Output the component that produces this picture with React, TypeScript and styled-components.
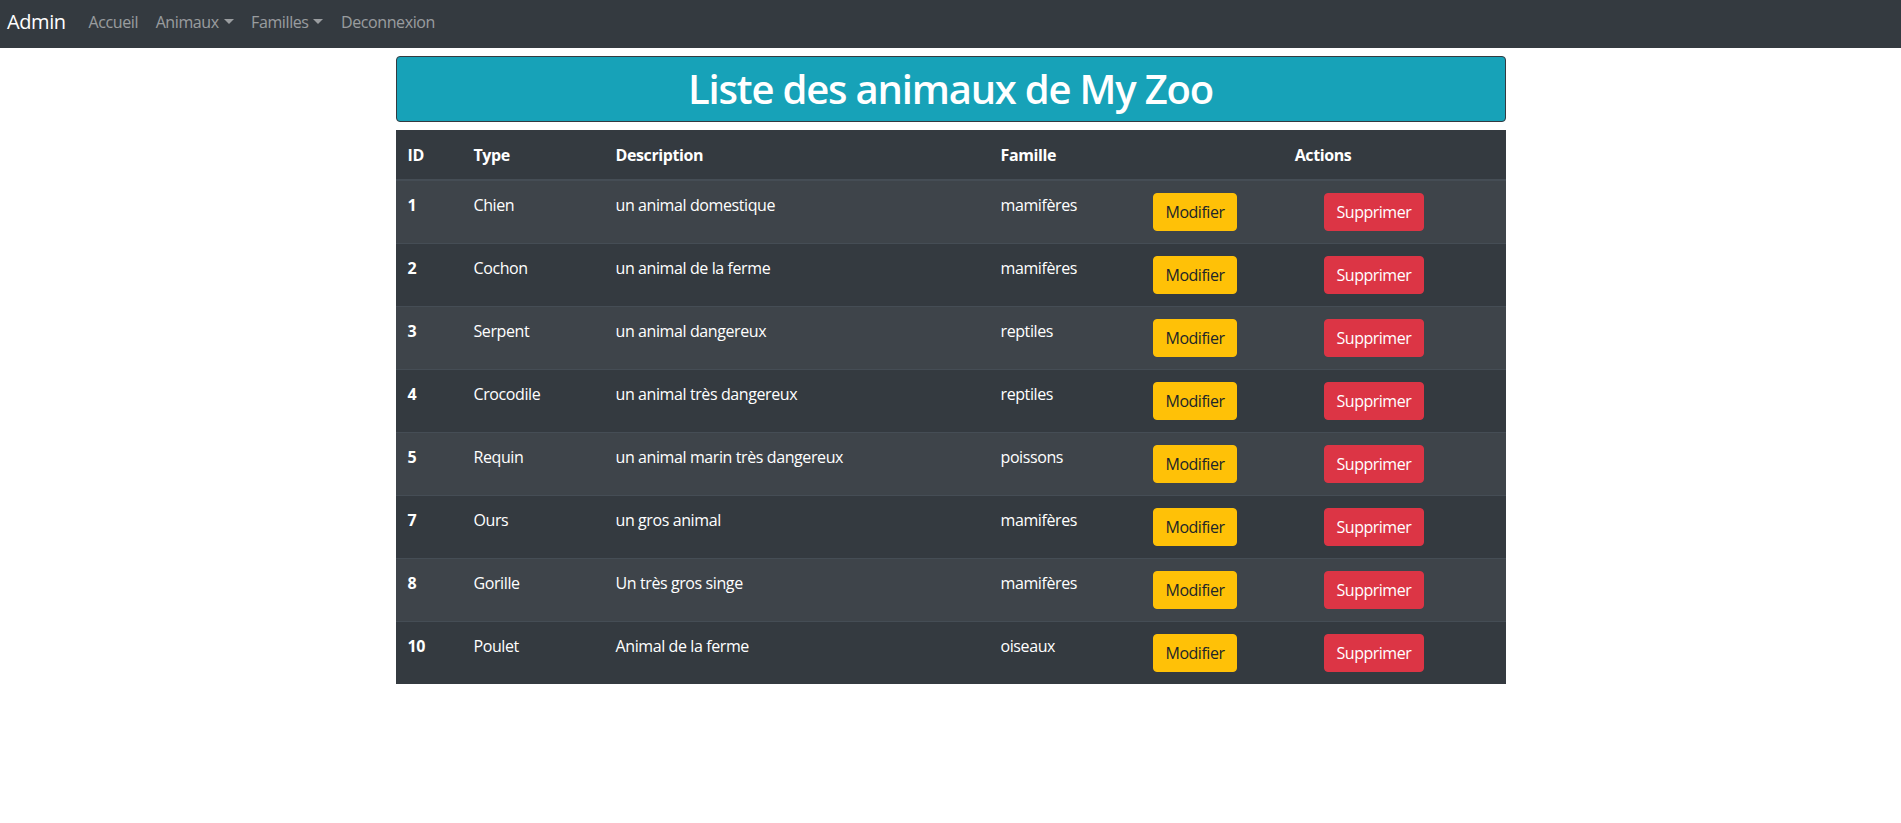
import React from "react";
import styled, { createGlobalStyle } from "styled-components";

const GlobalStyle = createGlobalStyle`
  html, body { margin: 0; padding: 0; background: #fff; }
  body {
    font-family: "Segoe UI", "Open Sans", "Noto Sans", sans-serif;
    font-size: 16px;
    line-height: 1.5;
    letter-spacing: -0.025em;
    color: #212529;
  }
  * { box-sizing: border-box; }
`;

const NavBar = styled.nav`
  height: 48px;
  background: #343a40;
  display: flex;
  align-items: center;
  padding: 0 7px 4px;
`;

const Brand = styled.a`
  color: #fff;
  font-size: 20px;
  line-height: 30px;
  margin-right: 14px;
  text-decoration: none;
`;

const NavLinks = styled.ul`
  display: flex;
  list-style: none;
  margin: 0;
  padding: 0;
`;

const NavLink = styled.a<{ $dropdown?: boolean }>`
  display: block;
  padding: 8px 8.8px;
  color: rgba(255, 255, 255, 0.5);
  text-decoration: none;
  ${(p) =>
    p.$dropdown
      ? `&::after {
    content: "";
    display: inline-block;
    margin-left: 0.3em;
    vertical-align: 0.255em;
    border-top: 0.32em solid;
    border-right: 0.32em solid transparent;
    border-left: 0.32em solid transparent;
  }`
      : ""}
`;

const Container = styled.main`
  width: 1110px;
  margin: 8px auto 0;
`;

const TitleBox = styled.div`
  background: #17a2b8;
  border: 1px solid #343a40;
  border-radius: 4px;
  padding: 8px 0;
  text-align: center;
`;

const Title = styled.h1`
  margin: 0;
  color: #fff;
  font-size: 40px;
  font-weight: 600;
  line-height: 1.2;
  letter-spacing: -0.03em;
`;

const Table = styled.table`
  width: 100%;
  margin-top: 8px;
  border-collapse: collapse;
  table-layout: fixed;
  background: #343a40;
  color: #fff;
`;

const HeadCell = styled.th<{ $center?: boolean }>`
  padding: 13px 12px 12px;
  font-weight: 700;
  text-align: ${(p) => (p.$center ? "center" : "left")};
  vertical-align: bottom;
  border-bottom: 2px solid #454d55;
`;

const Row = styled.tr<{ $striped: boolean }>`
  background: ${(p) => (p.$striped ? "#3e444a" : "#343a40")};
  border-top: 1px solid #454d55;
  &:first-child { border-top: none; }
`;

const Cell = styled.td<{ $bold?: boolean }>`
  padding: 12px;
  vertical-align: top;
  font-weight: ${(p) => (p.$bold ? 700 : 400)};
`;

const Button = styled.button<{ $variant: "warning" | "danger" }>`
  display: inline-block;
  height: 38px;
  padding: 6px 12px;
  font-family: inherit;
  font-size: 16px;
  line-height: 24px;
  letter-spacing: -0.03em;
  border-radius: 4px;
  border: 1px solid ${(p) => (p.$variant === "warning" ? "#ffc107" : "#dc3545")};
  background: ${(p) => (p.$variant === "warning" ? "#ffc107" : "#dc3545")};
  color: ${(p) => (p.$variant === "warning" ? "#212529" : "#fff")};
  cursor: pointer;
`;

const animals = [
  { id: 1, type: "Chien", desc: "un animal domestique", fam: "mamifères" },
  { id: 2, type: "Cochon", desc: "un animal de la ferme", fam: "mamifères" },
  { id: 3, type: "Serpent", desc: "un animal dangereux", fam: "reptiles" },
  { id: 4, type: "Crocodile", desc: "un animal très dangereux", fam: "reptiles" },
  { id: 5, type: "Requin", desc: "un animal marin très dangereux", fam: "poissons" },
  { id: 7, type: "Ours", desc: "un gros animal", fam: "mamifères" },
  { id: 8, type: "Gorille", desc: "Un très gros singe", fam: "mamifères" },
  { id: 10, type: "Poulet", desc: "Animal de la ferme", fam: "oiseaux" },
];

export default function App() {
  return (
    <>
      <GlobalStyle />
      <NavBar>
        <Brand href="#">Admin</Brand>
        <NavLinks>
          <li><NavLink href="#">Accueil</NavLink></li>
          <li><NavLink href="#" $dropdown>Animaux</NavLink></li>
          <li><NavLink href="#" $dropdown>Familles</NavLink></li>
          <li><NavLink href="#">Deconnexion</NavLink></li>
        </NavLinks>
      </NavBar>
      <Container>
        <TitleBox>
          <Title>Liste des animaux de My Zoo</Title>
        </TitleBox>
        <Table>
          <colgroup>
            <col style={{ width: 66 }} />
            <col style={{ width: 142 }} />
            <col style={{ width: 385 }} />
            <col style={{ width: 152 }} />
            <col style={{ width: 171 }} />
            <col style={{ width: 194 }} />
          </colgroup>
          <thead>
            <tr>
              <HeadCell>ID</HeadCell>
              <HeadCell>Type</HeadCell>
              <HeadCell>Description</HeadCell>
              <HeadCell>Famille</HeadCell>
              <HeadCell colSpan={2} $center>Actions</HeadCell>
            </tr>
          </thead>
          <tbody>
            {animals.map((a, i) => (
              <Row key={a.id} $striped={i % 2 === 0}>
                <Cell $bold>{a.id}</Cell>
                <Cell>{a.type}</Cell>
                <Cell>{a.desc}</Cell>
                <Cell>{a.fam}</Cell>
                <Cell><Button $variant="warning">Modifier</Button></Cell>
                <Cell><Button $variant="danger">Supprimer</Button></Cell>
              </Row>
            ))}
          </tbody>
        </Table>
      </Container>
    </>
  );
}
